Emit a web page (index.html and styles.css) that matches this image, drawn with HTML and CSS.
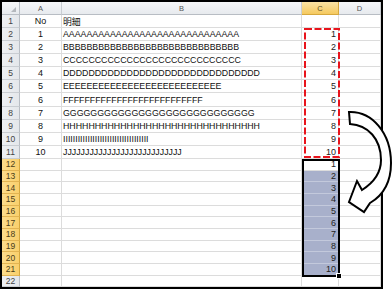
FILE: index.html
```html
<!DOCTYPE html>
<html lang="ja">
<head>
  <meta charset="UTF-8">
  <title>明細 - コピー</title>
  <link rel="stylesheet" href="styles.css">
</head>
<body>
  <div class="page">
    <div class="sheet">
      <div class="row head">
        <div class="c corner"><span class="tri"></span></div>
        <div class="c ch">A</div>
        <div class="c ch">B</div>
        <div class="c ch sel">C</div>
        <div class="c ch">D</div>
      </div>

      <div class="row tall"><div class="c rh">1</div><div class="c num">No</div><div class="c txt">明細</div><div class="c val"></div><div class="c"></div></div>
      <div class="row tall"><div class="c rh">2</div><div class="c num">1</div><div class="c txt">AAAAAAAAAAAAAAAAAAAAAAAAAAAAAA</div><div class="c val">1</div><div class="c"></div></div>
      <div class="row tall"><div class="c rh">3</div><div class="c num">2</div><div class="c txt">BBBBBBBBBBBBBBBBBBBBBBBBBBBBBB</div><div class="c val">2</div><div class="c"></div></div>
      <div class="row tall"><div class="c rh">4</div><div class="c num">3</div><div class="c txt">CCCCCCCCCCCCCCCCCCCCCCCCCCCC</div><div class="c val">3</div><div class="c"></div></div>
      <div class="row tall"><div class="c rh">5</div><div class="c num">4</div><div class="c txt">DDDDDDDDDDDDDDDDDDDDDDDDDDDDDDD</div><div class="c val">4</div><div class="c"></div></div>
      <div class="row tall"><div class="c rh">6</div><div class="c num">5</div><div class="c txt">EEEEEEEEEEEEEEEEEEEEEEEEEEE</div><div class="c val">5</div><div class="c"></div></div>
      <div class="row tall"><div class="c rh">7</div><div class="c num">6</div><div class="c txt">FFFFFFFFFFFFFFFFFFFFFFFFFF</div><div class="c val">6</div><div class="c"></div></div>
      <div class="row tall"><div class="c rh">8</div><div class="c num">7</div><div class="c txt">GGGGGGGGGGGGGGGGGGGGGGGGGGGG</div><div class="c val">7</div><div class="c"></div></div>
      <div class="row tall"><div class="c rh">9</div><div class="c num">8</div><div class="c txt">HHHHHHHHHHHHHHHHHHHHHHHHHHHHHHH</div><div class="c val">8</div><div class="c"></div></div>
      <div class="row tall"><div class="c rh">10</div><div class="c num">9</div><div class="c txt">IIIIIIIIIIIIIIIIIIIIIIIIIIIIIIIIIII</div><div class="c val">9</div><div class="c"></div></div>
      <div class="row tall"><div class="c rh">11</div><div class="c num">10</div><div class="c txt">JJJJJJJJJJJJJJJJJJJJJJJJJJJ</div><div class="c val">10</div><div class="c"></div></div>

      <div class="row short"><div class="c rh sel">12</div><div class="c"></div><div class="c"></div><div class="c val">1</div><div class="c"></div></div>
      <div class="row short"><div class="c rh sel">13</div><div class="c"></div><div class="c"></div><div class="c val fill">2</div><div class="c"></div></div>
      <div class="row short"><div class="c rh sel">14</div><div class="c"></div><div class="c"></div><div class="c val fill">3</div><div class="c"></div></div>
      <div class="row short"><div class="c rh sel">15</div><div class="c"></div><div class="c"></div><div class="c val fill">4</div><div class="c"></div></div>
      <div class="row short"><div class="c rh sel">16</div><div class="c"></div><div class="c"></div><div class="c val fill">5</div><div class="c"></div></div>
      <div class="row short"><div class="c rh sel">17</div><div class="c"></div><div class="c"></div><div class="c val fill">6</div><div class="c"></div></div>
      <div class="row short"><div class="c rh sel">18</div><div class="c"></div><div class="c"></div><div class="c val fill">7</div><div class="c"></div></div>
      <div class="row short"><div class="c rh sel">19</div><div class="c"></div><div class="c"></div><div class="c val fill">8</div><div class="c"></div></div>
      <div class="row short"><div class="c rh sel">20</div><div class="c"></div><div class="c"></div><div class="c val fill">9</div><div class="c"></div></div>
      <div class="row short"><div class="c rh sel">21</div><div class="c"></div><div class="c"></div><div class="c val fill">10</div><div class="c"></div></div>
      <div class="row short"><div class="c rh">22</div><div class="c"></div><div class="c"></div><div class="c"></div><div class="c"></div></div>
    </div>

    <!-- copy marks drawn over the sheet -->
    <svg class="marks" width="392" height="289" viewBox="0 0 392 289">
      <rect x="305" y="29" width="34" height="128" fill="none" stroke="#e8141c" stroke-width="2" stroke-dasharray="7 2.5"/>
      <rect x="303" y="160" width="36" height="116" fill="none" stroke="#000" stroke-width="2"/>
      <rect x="336.5" y="273.5" width="5" height="5" fill="#000" stroke="#fff" stroke-width="1"/>
      <path d="M349 112 C372 111 391 133 391 163 C391 183 382 196 370 203 L364 212 L349 202 L357 181 L362 190 C373 183 381 173 381 160 C381 139 368 125 350 124 Z" fill="#fff" stroke="#000" stroke-width="2" stroke-linejoin="miter"/>
    </svg>
  </div>
</body>
</html>
```

FILE: styles.css
```css
body {
  margin: 0;
  background: #fff;
  font-family: 'Liberation Sans', 'Noto Sans CJK JP', sans-serif;
}

.page {
  position: relative;
  width: 392px;
  height: 289px;
  overflow: hidden;
}

.sheet {
  width: 379px;
  height: 285px;
  border: 2px solid #000;
  overflow: hidden;
  background: #fff;
}

.row {
  display: grid;
  grid-template-columns: 18px 42px 240px 37px 42px;
}

.row.head {
  height: 13px;
}

.row.tall {
  height: 13.09px;
}

.row.short {
  height: 11.7px;
}

.c {
  box-sizing: border-box;
  border-right: 1px solid #dcdcdc;
  border-bottom: 1px solid #dcdcdc;
  display: flex;
  align-items: center;
  overflow: hidden;
  white-space: nowrap;
  font-size: 8.8px;
  color: #111;
}

.corner {
  position: relative;
  background: linear-gradient(#f6f7f9, #e7eaee);
  border-right-color: #b8bdc4;
  border-bottom-color: #b8bdc4;
}

.tri {
  position: absolute;
  right: 3px;
  bottom: 2px;
  width: 0;
  height: 0;
  border-left: 5px solid transparent;
  border-bottom: 5px solid #b4b8bd;
}

.ch {
  justify-content: center;
  background: linear-gradient(#f6f7f9, #e7eaee);
  border-right-color: #c9cdd2;
  border-bottom-color: #b8bdc4;
  color: #555;
  font-size: 7.5px;
}

.ch.sel {
  background: linear-gradient(#fbe3a4, #f5c95f);
  border-right-color: #d6a83e;
  border-bottom-color: #d6a83e;
  color: #5a4a20;
}

.rh {
  justify-content: center;
  background: linear-gradient(90deg, #eef0f3, #e4e7eb);
  border-right-color: #b8bdc4;
  border-bottom-color: #c9cdd2;
  color: #444;
  font-size: 8.5px;
}

.rh.sel {
  background: linear-gradient(90deg, #fcdc8c, #f9d06c);
  border-bottom-color: #e2b452;
  border-right-color: #d6a83e;
  color: #4a3d18;
}

.num {
  justify-content: center;
  font-size: 9px;
}

.txt {
  padding-left: 1px;
}

.val {
  justify-content: flex-end;
  padding-right: 2px;
  font-size: 9px;
  color: #222;
}

.val.fill {
  background: #a8b0cb;
  border-bottom-color: #c3c9dc;
}

.marks {
  position: absolute;
  left: 0;
  top: 0;
}
```
